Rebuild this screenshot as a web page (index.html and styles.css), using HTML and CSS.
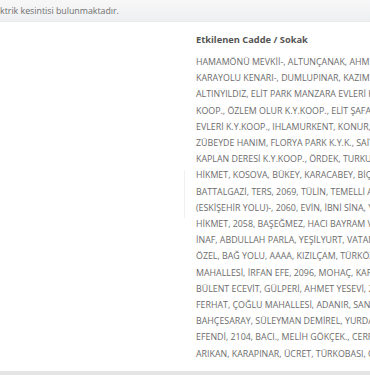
FILE: index.html
```
<!DOCTYPE html>
<html lang="tr">
<head>
    <meta charset="UTF-8">
    <meta name="viewport" content="width=device-width, initial-scale=1.0">
    <title>Kesinti Bilgisi</title>
    <link rel="stylesheet" href="styles.css">
</head>
<body>
    <div class="alert-bar">
        <span class="alert-text">Elektrik kesintisi bulunmaktadır.</span>
    </div>

    <main class="outage">
        <div class="outage-side">
            <div class="side-rule"></div>
        </div>
        <section class="outage-streets">
            <h3>Etkilenen Cadde / Sokak</h3>
            <div class="street-list">
                <span>HAMAMÖNÜ MEVKİİ-, ALTUNÇANAK, AHMET</span>
                <span>KARAYOLU KENARI-, DUMLUPINAR, KAZIM KARABEKİR</span>
                <span>ALTINYILDIZ, ELİT PARK MANZARA EVLERİ K.Y.</span>
                <span>KOOP., ÖZLEM OLUR K.Y.KOOP., ELİT ŞAFAK</span>
                <span>EVLERİ K.Y.KOOP., IHLAMURKENT, KONUR, ÇINAR</span>
                <span>ZÜBEYDE HANIM, FLORYA PARK K.Y.K., SAİT</span>
                <span>KAPLAN DERESİ K.Y.KOOP., ÖRDEK, TURKUAZ</span>
                <span>HİKMET, KOSOVA, BÜKEY, KARACABEY, BİÇER</span>
                <span>BATTALGAZİ, TERS, 2069, TÜLİN, TEMELLİ AKÇA</span>
                <span>(ESKİŞEHİR YOLU)-, 2060, EVİN, İBNİ SİNA, YUNUS</span>
                <span>HİKMET, 2058, BAŞEĞMEZ, HACI BAYRAM VELİ</span>
                <span>İNAF, ABDULLAH PARLA, YEŞİLYURT, VATAN</span>
                <span>ÖZEL, BAĞ YOLU, AAAA, KIZILÇAM, TÜRKÖZÜ</span>
                <span>MAHALLESİ, İRFAN EFE, 2096, MOHAÇ, KARTAL</span>
                <span>BÜLENT ECEVİT, GÜLPERİ, AHMET YESEVİ, 2097</span>
                <span>FERHAT, ÇOĞLU MAHALLESİ, ADANIR, SANAT</span>
                <span>BAHÇESARAY, SÜLEYMAN DEMİREL, YURDAKUL</span>
                <span>EFENDİ, 2104, BACI., MELİH GÖKÇEK., CERRAH</span>
                <span>ARIKAN, KARAPINAR, ÜCRET, TÜRKOBASI, ÇAMLIK</span>
            </div>
        </section>
    </main>

    <footer class="page-foot"></footer>
</body>
</html>
```

FILE: styles.css
```
* {
    margin: 0;
    padding: 0;
    box-sizing: border-box;
}

html, body {
    height: 100%;
    overflow: hidden;
}

body {
    font-family: 'Open Sans', 'Noto Sans', sans-serif;
    color: #6a6a6a;
    background-color: #fff;
    display: flex;
    flex-direction: column;
}

.alert-bar {
    height: 22px;
    background: linear-gradient(#f7f7f8, #eeeff1);
    border-bottom: 1px solid #ebebeb;
    display: flex;
    align-items: center;
    overflow: hidden;
    white-space: nowrap;
}

.alert-text {
    margin-left: -12px;
    font-size: 8.8px;
    color: #6f6f6f;
}

.outage {
    flex: 1;
    display: flex;
    overflow: hidden;
}

.outage-side {
    width: 185px;
    flex-shrink: 0;
    padding-top: 148px;
}

.side-rule {
    margin-left: 184px;
    width: 1px;
    height: 48px;
    background-color: #f1f1f1;
}

.outage-streets {
    padding: 11px 0 0 11px;
    white-space: nowrap;
}

.outage-streets h3 {
    font-size: 9.3px;
    font-weight: 700;
    color: #555;
    line-height: 14px;
    margin-bottom: 7px;
}

.street-list span {
    display: block;
    font-size: 8.85px;
    line-height: 16.2px;
    color: #6c6c6c;
}

.page-foot {
    height: 4px;
    flex-shrink: 0;
    background-color: #e5e5e5;
}
```
